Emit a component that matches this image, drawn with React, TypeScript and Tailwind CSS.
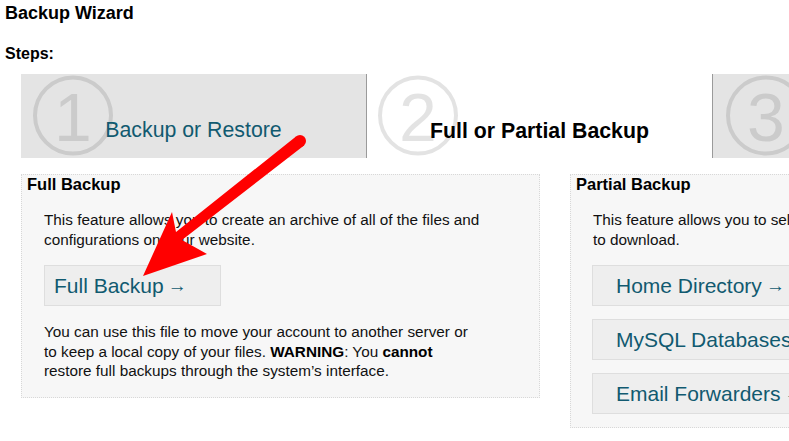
import React from "react";

const LINK = "text-[#115a70]";

function StepCircle({ n, cx }: { n: string; cx: number }) {
  return (
    <svg
      className="absolute left-0 top-0 pointer-events-none"
      width="110"
      height="84"
      viewBox="0 0 110 84"
    >
      <circle cx={cx} cy={41.5} r={38} fill="none" stroke="rgba(0,0,0,0.11)" strokeWidth={4} />
      <text
        x={cx}
        y={66.5}
        textAnchor="middle"
        fontSize={68}
        fontFamily="'Liberation Sans', Arial, sans-serif"
        fill="rgba(0,0,0,0.11)"
      >
        {n}
      </text>
    </svg>
  );
}

function Btn({ children, w, pl }: { children: React.ReactNode; w: string; pl: string }) {
  return (
    <div
      className={`box-border h-[41px] ${w} ${pl} flex items-center border border-[#dedede] bg-[#eeeeee] text-[21px] leading-[24px] ${LINK} whitespace-nowrap`}
    >
      {children}
    </div>
  );
}

export default function App() {
  return (
    <div
      className="relative w-[789px] h-[441px] overflow-hidden bg-white text-[#111]"
      style={{ fontFamily: "'Liberation Sans', Arial, sans-serif" }}
    >
      <div className="w-[1200px] px-[5px] pt-[2px]">
        <h1 className="text-[18px] font-bold leading-[22px] text-black">Backup Wizard</h1>
        <h2 className="mt-[20px] text-[16px] font-bold leading-[19px] text-black">Steps:</h2>

        <div className="mt-[11px] ml-[16px] flex h-[84px]">
          <div className="relative w-[346px] h-full bg-[#e4e4e4] border-r border-[#9a9a9a] text-center">
            <StepCircle n="1" cx={52} />
            <div className={`relative pt-[44px] text-[21.3px] leading-[24px] ${LINK}`}>Backup or Restore</div>
          </div>
          <div className="relative w-[345px] h-full bg-white text-center">
            <StepCircle n="2" cx={51} />
            <div className="relative pt-[45px] text-[21.3px] leading-[24px] font-bold text-black">
              Full or Partial Backup
            </div>
          </div>
          <div className="relative w-[346px] h-full bg-[#e4e4e4] border-l border-[#9a9a9a] text-center">
            <StepCircle n="3" cx={53} />
            <div className={`relative pt-[44px] text-[21.3px] leading-[24px] ${LINK}`}>Restore a Backup</div>
          </div>
        </div>

        <div className="mt-[16px] ml-[16px] flex items-start gap-[30px]">
          <div className="w-[519px] border border-dotted border-[#d8d8d8] bg-[#f7f7f7] px-[5px] pb-[16px]">
            <h3 className="text-[16.5px] font-bold leading-[19px] text-black">Full Backup</h3>
            <div className="ml-[17px] w-[460px]">
              <p className="mt-[16px] text-[15.3px] leading-[19.5px] whitespace-nowrap">
                This feature allows you to create an archive of all of the files and
                <br />
                configurations on your website.
              </p>
              <div className="mt-[16px]">
                <Btn w="w-[177px]" pl="pl-[9px]">
                  Full Backup <span className="ml-[4px] text-[19px]">→</span>
                </Btn>
              </div>
              <p className="mt-[16px] text-[15.3px] leading-[19.5px] whitespace-nowrap">
                You can use this file to move your account to another server or
                <br />
                to keep a local copy of your files. <strong className="text-black">WARNING</strong>: You{" "}
                <strong className="text-black">cannot</strong>
                <br />
                restore full backups through the system’s interface.
              </p>
            </div>
          </div>

          <div className="w-[519px] border border-dotted border-[#d8d8d8] bg-[#f7f7f7] px-[5px] pb-[13px]">
            <h3 className="text-[16.5px] font-bold leading-[19px] text-black">Partial Backup</h3>
            <div className="ml-[17px] w-[460px]">
              <p className="mt-[16px] text-[15.3px] leading-[19.5px] whitespace-nowrap">
                This feature allows you to select specific parts of your website
                <br />
                to download.
              </p>
              <div className="mt-[16px] -ml-[1px] flex flex-col gap-[13px]">
                <Btn w="w-[260px]" pl="pl-[23px]">
                  Home Directory <span className="ml-[4px] text-[19px]">→</span>
                </Btn>
                <Btn w="w-[260px]" pl="pl-[23px]">
                  MySQL Databases <span className="ml-[4px] text-[19px]">→</span>
                </Btn>
                <Btn w="w-[260px]" pl="pl-[23px]">
                  Email Forwarders <span className="ml-[4px] text-[19px]">→</span>
                </Btn>
              </div>
            </div>
          </div>
        </div>
      </div>

      <svg
        className="absolute left-0 top-0 pointer-events-none"
        width="789"
        height="441"
        viewBox="0 0 789 441"
      >
        <polygon
          fill="#ff0000"
          points="143,276 172,212 176,232 296.3,136.3 303.7,145.7 182,240 207,254"
        />
        <circle cx={300} cy={141} r={6} fill="#ff0000" />
      </svg>
    </div>
  );
}
